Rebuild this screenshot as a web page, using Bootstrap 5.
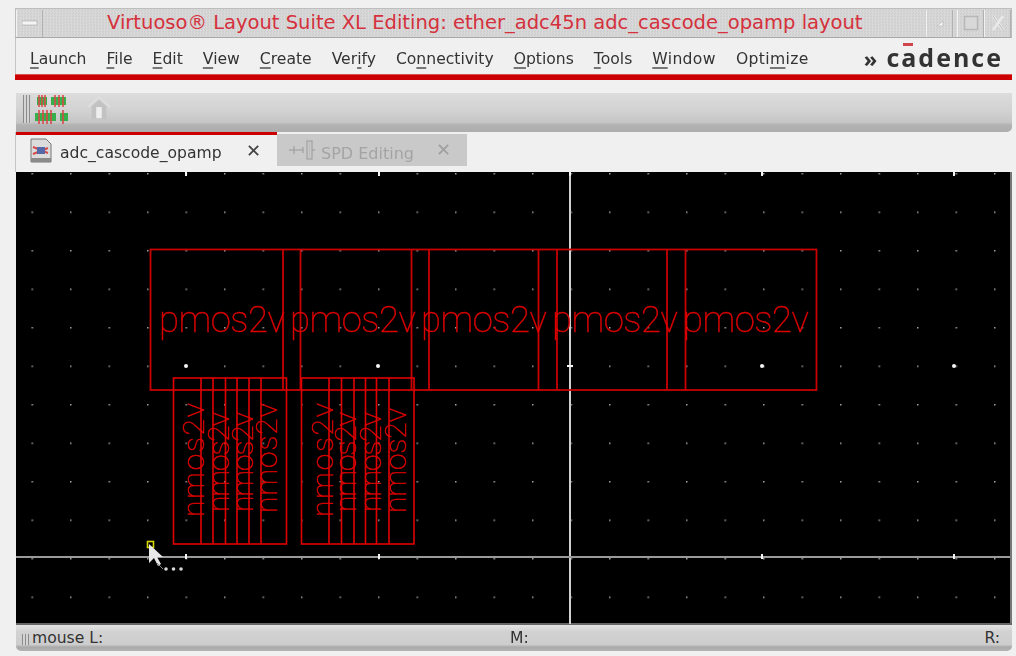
<!DOCTYPE html>
<html lang="en">
<head>
    <meta charset="UTF-8">
    <title>Virtuoso Layout Suite XL Editing</title>
    <link rel="stylesheet" href="https://cdn.jsdelivr.net/npm/bootstrap@5.3.0/dist/css/bootstrap.min.css">
    <style>
        html, body { height: 100%; }
        body {
            background: #f0f0f0;
            font-family: "DejaVu Sans", sans-serif;
            color: #333;
            overflow: hidden;
        }
        .app-window {
            width: 1016px;
            height: 656px;
            padding: 8px 4px 5px 15px;
            filter: blur(.35px);
        }
        .stipple {
            background-color: #d3d3d3;
            background-image: repeating-conic-gradient(#d9d9d9 0 25%, #cfcfcf 0 50%);
            background-size: 3px 3px;
        }
        .title-strip {
            height: 30px;
            border: 1px solid #bdbdbd;
            border-bottom-color: #a8a8a8;
        }
        .title-btn {
            width: 27px;
            height: 27px;
            border-left: 1px solid #f2f2f2;
            border-right: 1px solid #b0b0b0;
        }
        .title-text {
            font-size: 19.53px;
            color: #d5303c;
            padding-left: 64px;
            line-height: 28px;
            white-space: nowrap;
        }
        .menu-strip {
            height: 36px;
            padding-left: 14px;
            padding-right: 9px;
            padding-top: 8px;
            border-left: 1px solid #c4c4c4;
            font-size: 15.6px;
            gap: 20px;
        }
        .menu-item u { text-underline-offset: 3px; text-decoration-thickness: 2px; text-decoration-color: #777; }
        .menu-wide { letter-spacing: .35px; }
        .brand-mark {
            position: relative;
            font-family: "Open Sans", sans-serif;
            font-weight: 700;
            font-size: 25px;
            letter-spacing: 2px;
            color: #333;
            line-height: 28px;
            margin-top: -5px;
            white-space: nowrap;
        }
        .brand-arrows { font-size: 22px; letter-spacing: 0; margin-right: 9px; font-weight: 700; }
        .brand-bar {
            position: absolute;
            left: 39px;
            top: 0;
            width: 10px;
            height: 3px;
            background: #d0454c;
        }
        .red-rule { height: 6px; background: #cc0000; border-top: 1px solid #d95050; }
        .tool-strip {
            height: 39px;
            margin-top: 13px;
            margin-left: 1px;
            padding-left: 7px;
            border-bottom-right-radius: 5px;
            background: linear-gradient(#dcdcdc 0, #d2d2d2 45%, #c6c6c6 75%, #b2b2b2 82%, #adadad 100%);
        }
        .grip-lines {
            width: 8px;
            height: 28px;
            margin-top: 2px;
            background: repeating-linear-gradient(90deg, #8a8a8a 0 1px, #d4d4d4 1px 3px);
        }
        .tool-icon { margin-left: 3px; }
        .tab-row { height: 40px; border-left: 1px solid #c4c4c4; }
        .tab-active {
            width: 261px;
            height: 34px;
            border-top: 3px solid #cc0000;
            padding-left: 14px;
            font-size: 15.6px;
        }
        .tab-idle {
            width: 190px;
            height: 32px;
            margin-top: 2px;
            background: #c9c9c9;
            padding-left: 12px;
            font-size: 16px;
            color: #a4a4a4;
        }
        .tab-label { padding-top: 7px; }
        .tab-idle .tab-label { margin-left: 6px; }
        .tab-close { font-weight: 700; font-size: 18px; line-height: 1; color: #444; }
        .tab-idle .tab-close { color: #a0a0a0; }
        .canvas-frame { height: 453px; margin-left: 1px; background: #000; }
        .canvas-frame svg { display: block; }
        .dev-label {
            font-family: "Roboto", sans-serif;
            font-weight: 100;
            fill: #e00000;
            stroke: #e00000;
            stroke-width: .45px;
        }
        .status-strip {
            height: 26px;
            margin-left: 1px;
            padding: 2px 12px 0 6px;
            font-size: 15.6px;
            color: #333;
            border-bottom-left-radius: 5px;
            border-bottom-right-radius: 5px;
            background: linear-gradient(#e4e4e4 0, #d2d2d2 25%, #cdcdcd 75%, #a9a9a9 85%, #b4b4b4 100%);
        }
        .status-strip .grip-lines { width: 7px; height: 11px; margin: 0 3px 0 0; }
        .status-mid { left: 494px; }
    </style>
</head>
<body>
    <div class="app-window d-flex flex-column">
        <!-- title bar -->
        <div class="title-strip stipple d-flex align-items-center">
            <div class="title-btn d-flex align-items-center justify-content-center">
                <svg width="16" height="6"><rect width="15" height="4" y="1" fill="#f4f4f4" stroke="#999" stroke-width=".5"/></svg>
            </div>
            <div class="title-text flex-grow-1">Virtuoso® Layout Suite XL Editing: ether_adc45n adc_cascode_opamp layout</div>
            <div class="title-btn d-flex align-items-center justify-content-center">
                <svg width="12" height="12"><path d="M3 9 L9 4 L9 9 Z" fill="#f4f4f4" stroke="#aaa" stroke-width=".5"/></svg>
            </div>
            <div class="title-btn d-flex align-items-center justify-content-center ms-1">
                <svg width="16" height="16"><rect x="1.5" y="1.5" width="13" height="13" fill="#d8d8d8" stroke="#b8b8b8" stroke-width="1.5"/></svg>
            </div>
            <div class="title-btn d-flex align-items-center justify-content-center">
                <svg width="18" height="18"><path d="M4 2 L14 16 M14 2 L4 16" stroke="#e8e8e8" stroke-width="3"/><path d="M4 2 L8 8 M14 16 L10 10" stroke="#bcbcbc" stroke-width="1"/></svg>
            </div>
        </div>

        <!-- menu bar -->
        <div class="menu-strip d-flex align-items-center">
            <span class="menu-item"><u>L</u>aunch</span>
            <span class="menu-item"><u>F</u>ile</span>
            <span class="menu-item"><u>E</u>dit</span>
            <span class="menu-item"><u>V</u>iew</span>
            <span class="menu-item"><u>C</u>reate</span>
            <span class="menu-item">Ver<u>i</u>fy</span>
            <span class="menu-item">Co<u>n</u>nectivity</span>
            <span class="menu-item"><u>O</u>ptions</span>
            <span class="menu-item"><u>T</u>ools</span>
            <span class="menu-item menu-wide"><u>W</u>indow</span>
            <span class="menu-item menu-wide">Opti<u>m</u>ize</span>
            <div class="brand-mark ms-auto"><span class="brand-arrows">»</span>cadence<span class="brand-bar"></span></div>
        </div>
        <div class="red-rule"></div>

        <!-- toolbar -->
        <div class="tool-strip d-flex">
            <div class="grip-lines"></div>
            <svg class="tool-icon" width="36" height="34" viewBox="0 0 36 34">
                <g fill="#35b04a">
                    <rect x="3" y="4" width="10" height="8"/><rect x="17" y="4" width="15" height="8"/>
                    <rect x="1" y="20" width="21" height="8"/><rect x="26" y="20" width="8" height="8"/>
                </g>
                <g stroke="#d84a4a" stroke-width="1.6">
                    <path d="M5 2V14M8 2V14M11 2V14M21 2V14M25 2V14M29 2V14"/>
                    <path d="M5 17V31M9 17V31M13 17V31M17 17V31M29 17V31"/>
                </g>
            </svg>
            <svg class="ms-3" width="26" height="30" viewBox="0 0 28 30">
                <path d="M2 14 L14 3 L26 14" fill="none" stroke="#dedede" stroke-width="2"/>
                <path d="M6 13 L14 6 L22 13 V27 H6 Z" fill="#c2c2c2"/>
                <rect x="11" y="14" width="6" height="12" fill="#eeeeee"/>
            </svg>
        </div>

        <!-- tabs -->
        <div class="tab-row d-flex">
            <div class="tab-active d-flex align-items-center">
                <svg width="22" height="25" viewBox="0 0 22 25">
                    <path d="M1 1H16L21 6V24H1Z" fill="#dcdcdc" stroke="#777"/>
                    <path d="M3 9 L18 15 M3 16 L18 10" stroke="#d84a4a" stroke-width="2"/>
                    <rect x="7" y="9" width="8" height="7" fill="#5568a8"/>
                    <rect x="1" y="20" width="20" height="4" fill="#8a8a8a"/>
                </svg>
                <span class="tab-label ms-2">adc_cascode_opamp</span>
                <span class="tab-close ms-auto me-3">✕</span>
            </div>
            <div class="tab-idle d-flex align-items-center">
                <svg width="26" height="20" viewBox="0 0 26 20">
                    <path d="M0 10H5M5 6V14M5 10H14M14 7V13M23 10H26" stroke="#999" fill="none"/>
                    <rect x="18" y="1" width="5" height="18" fill="none" stroke="#999"/>
                    <path d="M20.500 1V19" stroke="#bbb"/>
                </svg>
                <span class="tab-label">SPD Editing</span>
                <span class="tab-close ms-auto me-3">✕</span>
            </div>
        </div>

        <!-- layout canvas -->
        <div class="canvas-frame">
            <svg width="996" height="453" viewBox="16 172 996 453">
                <defs>
                    <pattern id="gridDots" patternUnits="userSpaceOnUse" x="31.5" y="19" width="38.5" height="38.5">
                        <rect width="1.5" height="1.5" x="0" y="0" fill="#a0a0a0"/>
                    </pattern>
                </defs>
                <rect x="16" y="172" width="996" height="453" fill="url(#gridDots)"/>
                <rect x="1010" y="172" width="2" height="453" fill="#777"/>
                <rect x="16" y="623" width="996" height="2" fill="#666"/>

                <!-- crosshair -->
                <rect x="569" y="172" width="2" height="452" fill="#d0d0d0"/>
                <rect x="16" y="556" width="994" height="2" fill="#9a9a9a"/>

                <!-- major grid -->
                <g fill="#f4f4f4">
                    <circle cx="186" cy="366" r="2"/><circle cx="378" cy="366" r="2"/>
                    <circle cx="762" cy="366" r="2"/><circle cx="954" cy="366" r="2"/>
                    <rect x="567" y="365" width="6" height="2"/>
                    <rect x="185" y="172" width="2" height="4"/><rect x="378" y="172" width="2" height="4"/>
                    <rect x="569" y="172" width="2" height="4"/><rect x="761" y="172" width="2" height="4"/><rect x="953" y="172" width="2" height="4"/>
                    <rect x="185" y="554" width="2" height="5"/><rect x="378" y="554" width="2" height="5"/>
                    <rect x="761" y="554" width="2" height="5"/><rect x="953" y="554" width="2" height="5"/>
                </g>

                <!-- pmos row -->
                <g fill="none" stroke="#c80000" stroke-width="1.8">
                    <rect x="150.5" y="249.5" width="666" height="140.5"/>
                    <path d="M283 249V390M300.5 249V390M411.5 249V390M429 249V390M538.5 249V390M557 249V390M667 249V390M685.5 249V390"/>
                </g>
                <g class="dev-label" font-size="36.5">
                    <text x="159" y="332" textLength="126" lengthAdjust="spacing">pmos2v</text>
                    <text x="290" y="332" textLength="126" lengthAdjust="spacing">pmos2v</text>
                    <text x="421" y="332" textLength="126" lengthAdjust="spacing">pmos2v</text>
                    <text x="552" y="332" textLength="126" lengthAdjust="spacing">pmos2v</text>
                    <text x="683" y="332" textLength="126" lengthAdjust="spacing">pmos2v</text>
                </g>

                <!-- nmos rows -->
                <g fill="none" stroke="#e00000" stroke-width="1.6">
                    <rect x="173.5" y="378" width="113" height="166"/>
                    <path d="M201 378V544M213 378V544M225.5 378V544M237 378V544M249 378V544M261 378V544"/>
                    <rect x="301.5" y="378" width="112.5" height="166"/>
                    <path d="M329 378V544M341.5 378V544M354 378V544M365.5 378V544M376.5 378V544M389 378V544"/>
                </g>
                <g class="dev-label" font-size="30">
                    <text transform="translate(204 517) rotate(-90)" textLength="114">nmos2v</text>
                    <text transform="translate(229 512) rotate(-90)" textLength="100">nmos2v</text>
                    <text transform="translate(253 512) rotate(-90)" textLength="100">nmos2v</text>
                    <text transform="translate(277 513) rotate(-90)" textLength="110">nmos2v</text>
                    <text transform="translate(333 517) rotate(-90)" textLength="114">nmos2v</text>
                    <text transform="translate(356 512) rotate(-90)" textLength="100">nmos2v</text>
                    <text transform="translate(381 512) rotate(-90)" textLength="100">nmos2v</text>
                    <text transform="translate(406 513) rotate(-90)" textLength="105">nmos2v</text>
                </g>

                <!-- cursor -->
                <rect x="147.5" y="541.5" width="6" height="6" fill="none" stroke="#d8d800" stroke-width="1.6"/>
                <path d="M149 544 V563 L154 558 L158 566 L161 564 L157 557 L163 557 Z" fill="#e8e8e8"/>
                <path d="M157 563 L163 569" stroke="#888"/>
                <g fill="#d8d8d8"><circle cx="166" cy="569" r="1.8"/><circle cx="173.500" cy="569" r="1.8"/><circle cx="181" cy="569" r="1.8"/></g>
            </svg>
        </div>

        <!-- status bar -->
        <div class="status-strip d-flex align-items-center position-relative">
            <div class="grip-lines"></div>
            <span>mouse L:</span>
            <span class="position-absolute status-mid">M:</span>
            <span class="ms-auto">R:</span>
        </div>
    </div>
    <script src="https://cdn.jsdelivr.net/npm/bootstrap@5.3.0/dist/js/bootstrap.bundle.min.js"></script>
</body>
</html>
